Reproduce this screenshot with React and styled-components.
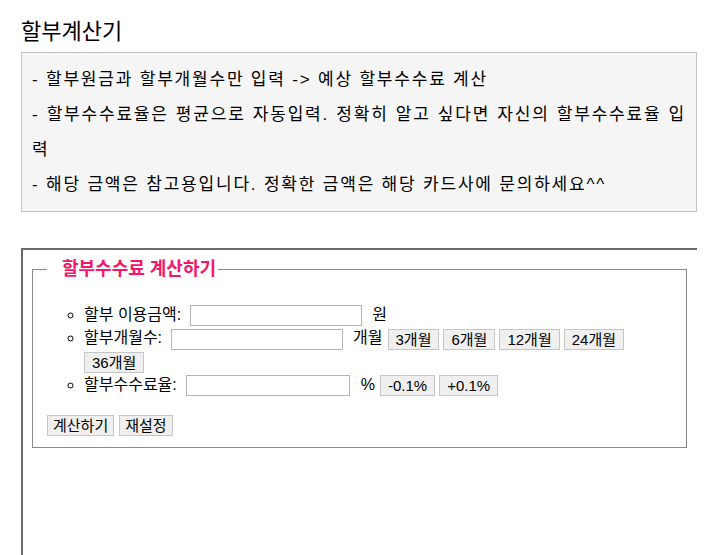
import React from 'react'
import styled, { createGlobalStyle } from 'styled-components'

const GlobalStyle = createGlobalStyle`
  html, body {
    margin: 0;
    padding: 0;
    overflow: hidden;
    background: #fff;
  }
  body {
    font-family: "Liberation Sans", "Noto Sans CJK KR", sans-serif;
    color: #000;
  }
`

const Page = styled.div`
  padding: 20px 23px 0 21px;
`

const Title = styled.h1`
  margin: 0 0 8px;
  font-size: 22px;
  line-height: 24px;
  font-weight: normal;
`

const InfoBox = styled.div`
  background: #f5f5f5;
  border: 1px solid #c4c4c4;
  padding: 9px 10px;
  font-size: 17px;
  letter-spacing: 1.8px;
  line-height: 35px;
  text-align: justify;
`

const InfoLine = styled.p`
  margin: 0;
`

const Panel = styled.div`
  margin-top: 36px;
  border-top: 2px solid #6a6a6a;
  border-left: 2px solid #6a6a6a;
  padding: 9px 10px 0 9px;
  height: 320px;
`

const Fieldset = styled.fieldset`
  margin: 0;
  border: 1px solid #8a8a8a;
  padding: 0 14px 11px;
`

const Legend = styled.legend`
  padding: 0 2px 0 15px;
  font-size: 18px;
  line-height: 20px;
  font-weight: bold;
  color: #f5166a;
`

const List = styled.ul`
  margin: 24px 0 19px;
  padding-left: 37px;
  list-style-type: circle;
  font-size: 16px;
`

const Item = styled.li`
  line-height: 23px;
`

const Label = styled.span``

const Field = styled.input`
  box-sizing: border-box;
  width: ${p => p.$w}px;
  height: 21px;
  margin: 0 ${p => p.$gap}px 0 9px;
  border: 1px solid #b5b5b5;
  padding: 0 3px;
  vertical-align: middle;
  font: inherit;
`

const Unit = styled.span`
  margin-right: 1px;
`

const Chip = styled.button`
  box-sizing: border-box;
  height: 21px;
  margin-left: ${p => (p.$first ? 0 : 4)}px;
  padding: 0 7px;
  border: 1px solid #c6c6c6;
  background: #efefef;
  font-family: "Liberation Sans", "Noto Sans CJK KR", sans-serif;
  font-size: 15px;
  line-height: 19px;
  color: #000;
  vertical-align: middle;
`

const Actions = styled.div`
  display: flex;
  gap: 5px;
`

const ActionButton = styled(Chip)`
  margin: 0;
  padding: 0 5px;
`

const months = ['3개월', '6개월', '12개월', '24개월', '36개월']

export default function App() {
  return (
    <>
      <GlobalStyle />
      <Page>
        <Title>할부계산기</Title>
        <InfoBox>
          <InfoLine>- 할부원금과 할부개월수만 입력 -&gt; 예상 할부수수료 계산</InfoLine>
          <InfoLine>- 할부수수료율은 평균으로 자동입력. 정확히 알고 싶다면 자신의 할부수수료율 입력</InfoLine>
          <InfoLine>- 해당 금액은 참고용입니다. 정확한 금액은 해당 카드사에 문의하세요^^</InfoLine>
        </InfoBox>
        <Panel>
          <Fieldset>
            <Legend>할부수수료 계산하기</Legend>
            <List>
              <Item>
                <Label>할부 이용금액:</Label>
                <Field $w={172} $gap={10} />
                <Unit>원</Unit>
              </Item>
              <Item>
                <Label>할부개월수:</Label>
                <Field $w={172} $gap={10} />
                <Unit>개월</Unit>
                {months.map((m, i) => (
                  <Chip key={m} $first={i === months.length - 1}>{m}</Chip>
                ))}
              </Item>
              <Item>
                <Label>할부수수료율:</Label>
                <Field $w={164} $gap={11} />
                <Unit>%</Unit>
                <Chip>-0.1%</Chip>
                <Chip>+0.1%</Chip>
              </Item>
            </List>
            <Actions>
              <ActionButton>계산하기</ActionButton>
              <ActionButton>재설정</ActionButton>
            </Actions>
          </Fieldset>
        </Panel>
      </Page>
    </>
  )
}
